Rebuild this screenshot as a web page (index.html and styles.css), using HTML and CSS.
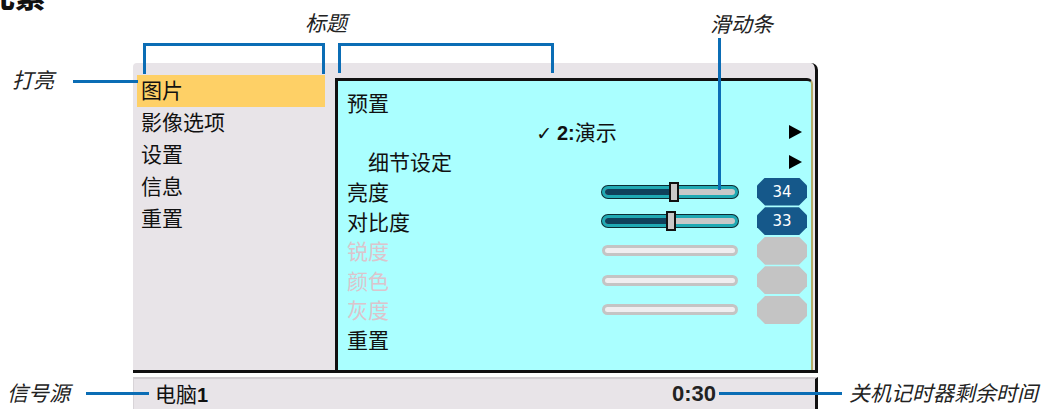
FILE: index.html
```html
<!DOCTYPE html>
<html lang="zh-CN">
<head>
<meta charset="utf-8">
<title>菜单元素</title>
<link rel="stylesheet" href="styles.css">
</head>
<body>
<div class="stage">
  <div class="page-title">元素</div>

  <div class="osd">
    <div class="main">
      <ul class="menu">
        <li class="menu-item is-active">图片</li>
        <li class="menu-item">影像选项</li>
        <li class="menu-item">设置</li>
        <li class="menu-item">信息</li>
        <li class="menu-item">重置</li>
      </ul>
      <div class="content">
        <div class="row"><span class="label">预置</span></div>
        <div class="row">
          <span class="preset-val"><span class="check">✓</span> <b class="num">2:</b>演示</span>
          <span class="arrow"></span>
        </div>
        <div class="row">
          <span class="label indent">细节设定</span>
          <span class="arrow"></span>
        </div>
        <div class="row">
          <span class="label">亮度</span>
          <div class="slider"><div class="fill" style="width:52.7%"></div><div class="thumb" style="left:52.7%"></div></div>
          <div class="badge">34</div>
        </div>
        <div class="row">
          <span class="label">对比度</span>
          <div class="slider"><div class="fill" style="width:50.8%"></div><div class="thumb" style="left:50.8%"></div></div>
          <div class="badge">33</div>
        </div>
        <div class="row">
          <span class="label is-disabled">锐度</span>
          <div class="slider is-disabled"></div>
          <div class="badge is-disabled"></div>
        </div>
        <div class="row">
          <span class="label is-disabled">颜色</span>
          <div class="slider is-disabled"></div>
          <div class="badge is-disabled"></div>
        </div>
        <div class="row">
          <span class="label is-disabled">灰度</span>
          <div class="slider is-disabled"></div>
          <div class="badge is-disabled"></div>
        </div>
        <div class="row"><span class="label">重置</span></div>
      </div>
    </div>
    <div class="status">
      <span class="source">电脑<b>1</b></span>
      <span class="timer">0:30</span>
    </div>
  </div>

  <!-- callouts -->
  <div class="note note-title">标题</div>
  <div class="note note-slider">滑动条</div>
  <div class="note note-hl">打亮</div>
  <div class="note note-src">信号源</div>
  <div class="note note-timer">关机记时器剩余时间</div>

  <div class="bracket bracket-menu"></div>
  <div class="bracket bracket-content"></div>
  <div class="line line-hl"></div>
  <div class="line line-slider"></div>
  <div class="line line-src"></div>
  <div class="line line-timer"></div>
</div>
</body>
</html>
```

FILE: styles.css
```css
* { box-sizing: border-box; }

html, body {
  margin: 0;
  padding: 0;
  background: #ffffff;
}

body {
  width: 1045px;
  height: 409px;
  overflow: hidden;
  font-family: "Noto Sans CJK SC", "Noto Sans", sans-serif;
  color: #111;
}

.stage {
  position: relative;
  width: 1045px;
  height: 409px;
  padding-top: 63px;
  padding-left: 133px;
}

.page-title {
  position: absolute;
  left: -15px;
  top: -21px;
  font-size: 30px;
  font-weight: 900;
  line-height: 1;
  color: #111;
}

/* OSD */
.osd {
  width: 685px;
}

.main {
  display: flex;
  height: 310px;
  background: #e8e4e8;
  border-bottom: 3px solid #111;
  border-right: 3px solid #111;
  border-top-right-radius: 7px;
  border-top-left-radius: 4px;
}

.menu {
  list-style: none;
  margin: 0;
  padding: 12px 0 0 4px;
  width: 202px;
  flex: none;
}

.menu-item {
  width: 188px;
  height: 32px;
  line-height: 28px;
  padding-left: 4px;
  font-size: 21px;
}

.menu-item.is-active {
  background: #fed066;
}

.content {
  margin-top: 15px;
  margin-right: 2px;
  flex: 1;
  height: 292px;
  background: #aaffff;
  border-left: 3px solid #111;
  border-top: 3px solid #111;
  border-right: 2px solid #b4ad6a;
  border-top-right-radius: 6px;
  padding: 7px 4px 0 0;
}

.row {
  display: flex;
  align-items: center;
  height: 29.6px;
}

.label {
  flex: 1;
  padding-left: 9px;
  font-size: 21px;
  line-height: 1;
}

.label.indent {
  padding-left: 30px;
}

.label.is-disabled {
  color: #dcc4cc;
}

.preset-val {
  flex: 1;
  text-align: center;
  padding-left: 26px;
  font-size: 21px;
  line-height: 1;
}

.check {
  font-family: "DejaVu Sans", sans-serif;
  font-size: 19px;
  font-weight: bold;
}

.num {
  font-family: "Liberation Sans", Arial, sans-serif;
  font-weight: bold;
  font-size: 20px;
}

.arrow {
  width: 0;
  height: 0;
  border-left: 13px solid #000;
  border-top: 7px solid transparent;
  border-bottom: 7px solid transparent;
  margin-right: 5px;
}

/* sliders */
.slider {
  position: relative;
  width: 136px;
  height: 12px;
  border-radius: 6px;
  background: #c8c8c8;
  border: 3px solid #1fa9b3;
  box-shadow: 0 0 0 1px #0c2c33;
  margin-right: 19px;
}

.slider .fill {
  height: 100%;
  background: #10405a;
  border-radius: 3px 0 0 3px;
}

.slider .thumb {
  position: absolute;
  top: -7px;
  width: 10px;
  height: 20px;
  margin-left: -5px;
  background: #c8c8c8;
  border: 2px solid #111;
}

.slider.is-disabled {
  height: 11px;
  background: #f0eef0;
  border: 3px solid #c4c4c4;
  box-shadow: none;
}

.badge {
  width: 50px;
  height: 28px;
  background: #15588a;
  color: #fff;
  font-family: "DejaVu Sans", sans-serif;
  font-size: 15px;
  line-height: 28px;
  text-align: center;
  clip-path: polygon(8px 0, 42px 0, 50px 8px, 50px 20px, 42px 28px, 8px 28px, 0 20px, 0 8px);
}

.badge.is-disabled {
  background: #c4c4c4;
}

/* status bar */
.status {
  margin-top: 4px;
  height: 32px;
  display: flex;
  align-items: center;
  justify-content: space-between;
  background: #e8e4e8;
  border-top: 2px solid #d2ced2;
  border-left: 1px solid #d8d4d8;
  border-right: 3px solid #111;
  padding: 0 99px 0 21px;
}

.source {
  font-size: 21px;
  line-height: 1;
}

.source b {
  font-family: "Liberation Sans", Arial, sans-serif;
  font-size: 20px;
}

.timer {
  font-family: "Liberation Sans", Arial, sans-serif;
  font-weight: bold;
  font-size: 22px;
  color: #222;
}

/* callouts */
.note {
  position: absolute;
  font-size: 21px;
  font-style: italic;
  line-height: 1;
  color: #222;
  white-space: nowrap;
}

.note-title { left: 305px; top: 12px; }
.note-slider { left: 710px; top: 13px; }
.note-hl { left: 12px; top: 69px; }
.note-src { left: 7px; top: 382px; }
.note-timer { left: 849px; top: 382px; }

.bracket {
  position: absolute;
  border: 3px solid #0b6db5;
  border-bottom: none;
}

.bracket-menu { left: 143px; top: 43px; width: 182px; height: 31px; }
.bracket-content { left: 338px; top: 43px; width: 216px; height: 30px; }

.line {
  position: absolute;
  background: #0b6db5;
}

.line-hl { left: 73px; top: 80px; width: 65px; height: 3px; }
.line-slider { left: 718px; top: 38px; width: 3px; height: 152px; }
.line-src { left: 86px; top: 392px; width: 63px; height: 3px; }
.line-timer { left: 719px; top: 392px; width: 123px; height: 3px; }
```
